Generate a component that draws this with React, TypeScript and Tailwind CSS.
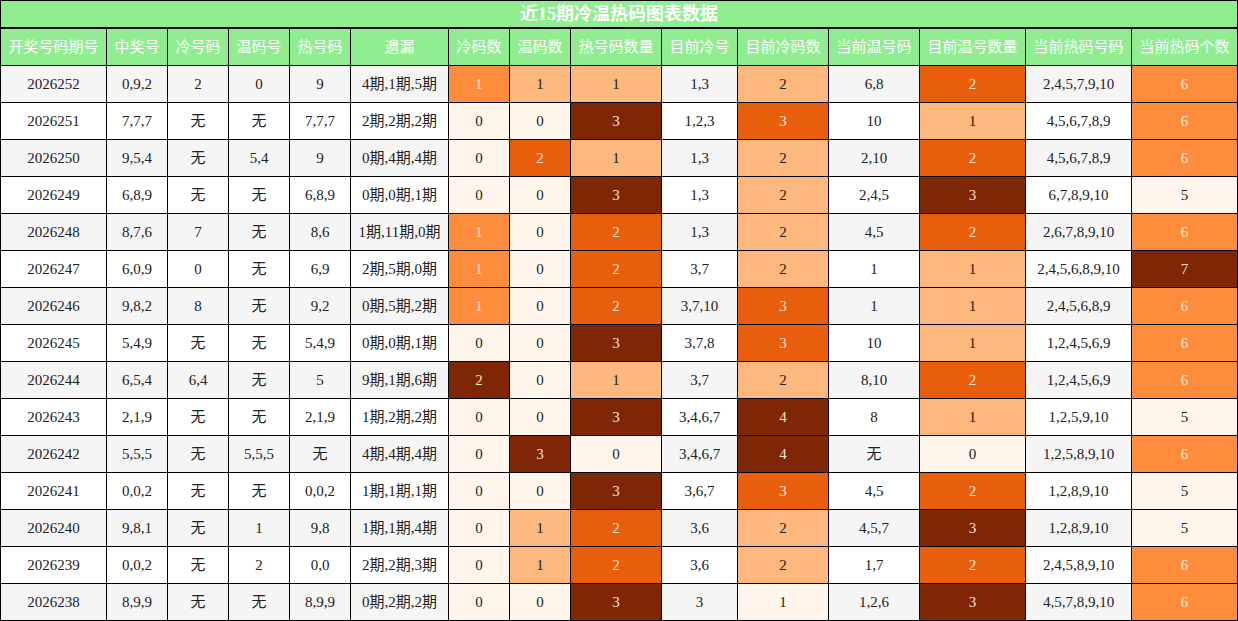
import React from "react";

const headers = [
  "开奖号码期号",
  "中奖号",
  "冷号码",
  "温码号",
  "热号码",
  "遗漏",
  "冷码数",
  "温码数",
  "热号码数量",
  "目前冷号",
  "目前冷码数",
  "当前温号码",
  "目前温号数量",
  "当前热码号码",
  "当前热码个数",
];

const rows: string[][] = [
  ["2026252", "0,9,2", "2", "0", "9", "4期,1期,5期", "1", "1", "1", "1,3", "2", "6,8", "2", "2,4,5,7,9,10", "6"],
  ["2026251", "7,7,7", "无", "无", "7,7,7", "2期,2期,2期", "0", "0", "3", "1,2,3", "3", "10", "1", "4,5,6,7,8,9", "6"],
  ["2026250", "9,5,4", "无", "5,4", "9", "0期,4期,4期", "0", "2", "1", "1,3", "2", "2,10", "2", "4,5,6,7,8,9", "6"],
  ["2026249", "6,8,9", "无", "无", "6,8,9", "0期,0期,1期", "0", "0", "3", "1,3", "2", "2,4,5", "3", "6,7,8,9,10", "5"],
  ["2026248", "8,7,6", "7", "无", "8,6", "1期,11期,0期", "1", "0", "2", "1,3", "2", "4,5", "2", "2,6,7,8,9,10", "6"],
  ["2026247", "6,0,9", "0", "无", "6,9", "2期,5期,0期", "1", "0", "2", "3,7", "2", "1", "1", "2,4,5,6,8,9,10", "7"],
  ["2026246", "9,8,2", "8", "无", "9,2", "0期,5期,2期", "1", "0", "2", "3,7,10", "3", "1", "1", "2,4,5,6,8,9", "6"],
  ["2026245", "5,4,9", "无", "无", "5,4,9", "0期,0期,1期", "0", "0", "3", "3,7,8", "3", "10", "1", "1,2,4,5,6,9", "6"],
  ["2026244", "6,5,4", "6,4", "无", "5", "9期,1期,6期", "2", "0", "1", "3,7", "2", "8,10", "2", "1,2,4,5,6,9", "6"],
  ["2026243", "2,1,9", "无", "无", "2,1,9", "1期,2期,2期", "0", "0", "3", "3,4,6,7", "4", "8", "1", "1,2,5,9,10", "5"],
  ["2026242", "5,5,5", "无", "5,5,5", "无", "4期,4期,4期", "0", "3", "0", "3,4,6,7", "4", "无", "0", "1,2,5,8,9,10", "6"],
  ["2026241", "0,0,2", "无", "无", "0,0,2", "1期,1期,1期", "0", "0", "3", "3,6,7", "3", "4,5", "2", "1,2,8,9,10", "5"],
  ["2026240", "9,8,1", "无", "1", "9,8", "1期,1期,4期", "0", "1", "2", "3,6", "2", "4,5,7", "3", "1,2,8,9,10", "5"],
  ["2026239", "0,0,2", "无", "2", "0,0", "2期,2期,3期", "0", "1", "2", "3,6", "2", "1,7", "2", "2,4,5,8,9,10", "6"],
  ["2026238", "8,9,9", "无", "无", "8,9,9", "0期,2期,2期", "0", "0", "3", "3", "1", "1,2,6", "3", "4,5,7,8,9,10", "6"],
];

const gradientCols = [6, 7, 8, 10, 12, 14];

const levelClass = [
  "bg-[#fff5eb] text-[#222]",
  "bg-[#fdb97d] text-[#222]",
  "bg-[#fd8d3c] text-[#f5e6da]",
  "bg-[#e95e0d] text-[#f5e6da]",
  "bg-[#7f2704] text-[#f1e2d6]",
];

function levelFor(col: number, v: number): number {
  const vals = rows.map((r) => Number(r[col]));
  const min = Math.min(...vals);
  const max = Math.max(...vals);
  const f = max === min ? 0 : (v - min) / (max - min);
  if (f < 0.2) return 0;
  if (f < 0.45) return 1;
  if (f < 0.6) return 2;
  if (f < 0.9) return 3;
  return 4;
}

const font = "font-['Liberation_Serif','Noto_Sans_CJK_SC',serif]";

export default function App() {
  return (
    <div className={`w-[1238px] h-[621px] bg-black p-px flex flex-col ${font}`}>
      <div className="h-[26px] bg-[#90ee90] flex items-center justify-center text-white font-bold text-[18px] leading-none">
        近15期冷温热码图表数据
      </div>
      <div className="mt-[2px] grid grid-cols-[105px_60px_60px_60px_60px_97px_60px_60px_90px_75px_90px_90px_105px_105px_105px] auto-rows-[36px] gap-px">
        {headers.map((h) => (
          <div
            key={h}
            className="bg-[#90ee90] text-white text-[15px] flex items-center justify-center whitespace-nowrap"
          >
            {h}
          </div>
        ))}
        {rows.map((r, ri) =>
          r.map((cell, ci) => {
            const rowBg = ri % 2 === 0 ? "bg-[#f5f5f5] text-[#222]" : "bg-white text-[#222]";
            const cls = gradientCols.includes(ci)
              ? levelClass[levelFor(ci, Number(cell))]
              : rowBg;
            return (
              <div
                key={`${ri}-${ci}`}
                className={`${cls} text-[15px] flex items-center justify-center whitespace-nowrap`}
              >
                {cell}
              </div>
            );
          })
        )}
      </div>
    </div>
  );
}
